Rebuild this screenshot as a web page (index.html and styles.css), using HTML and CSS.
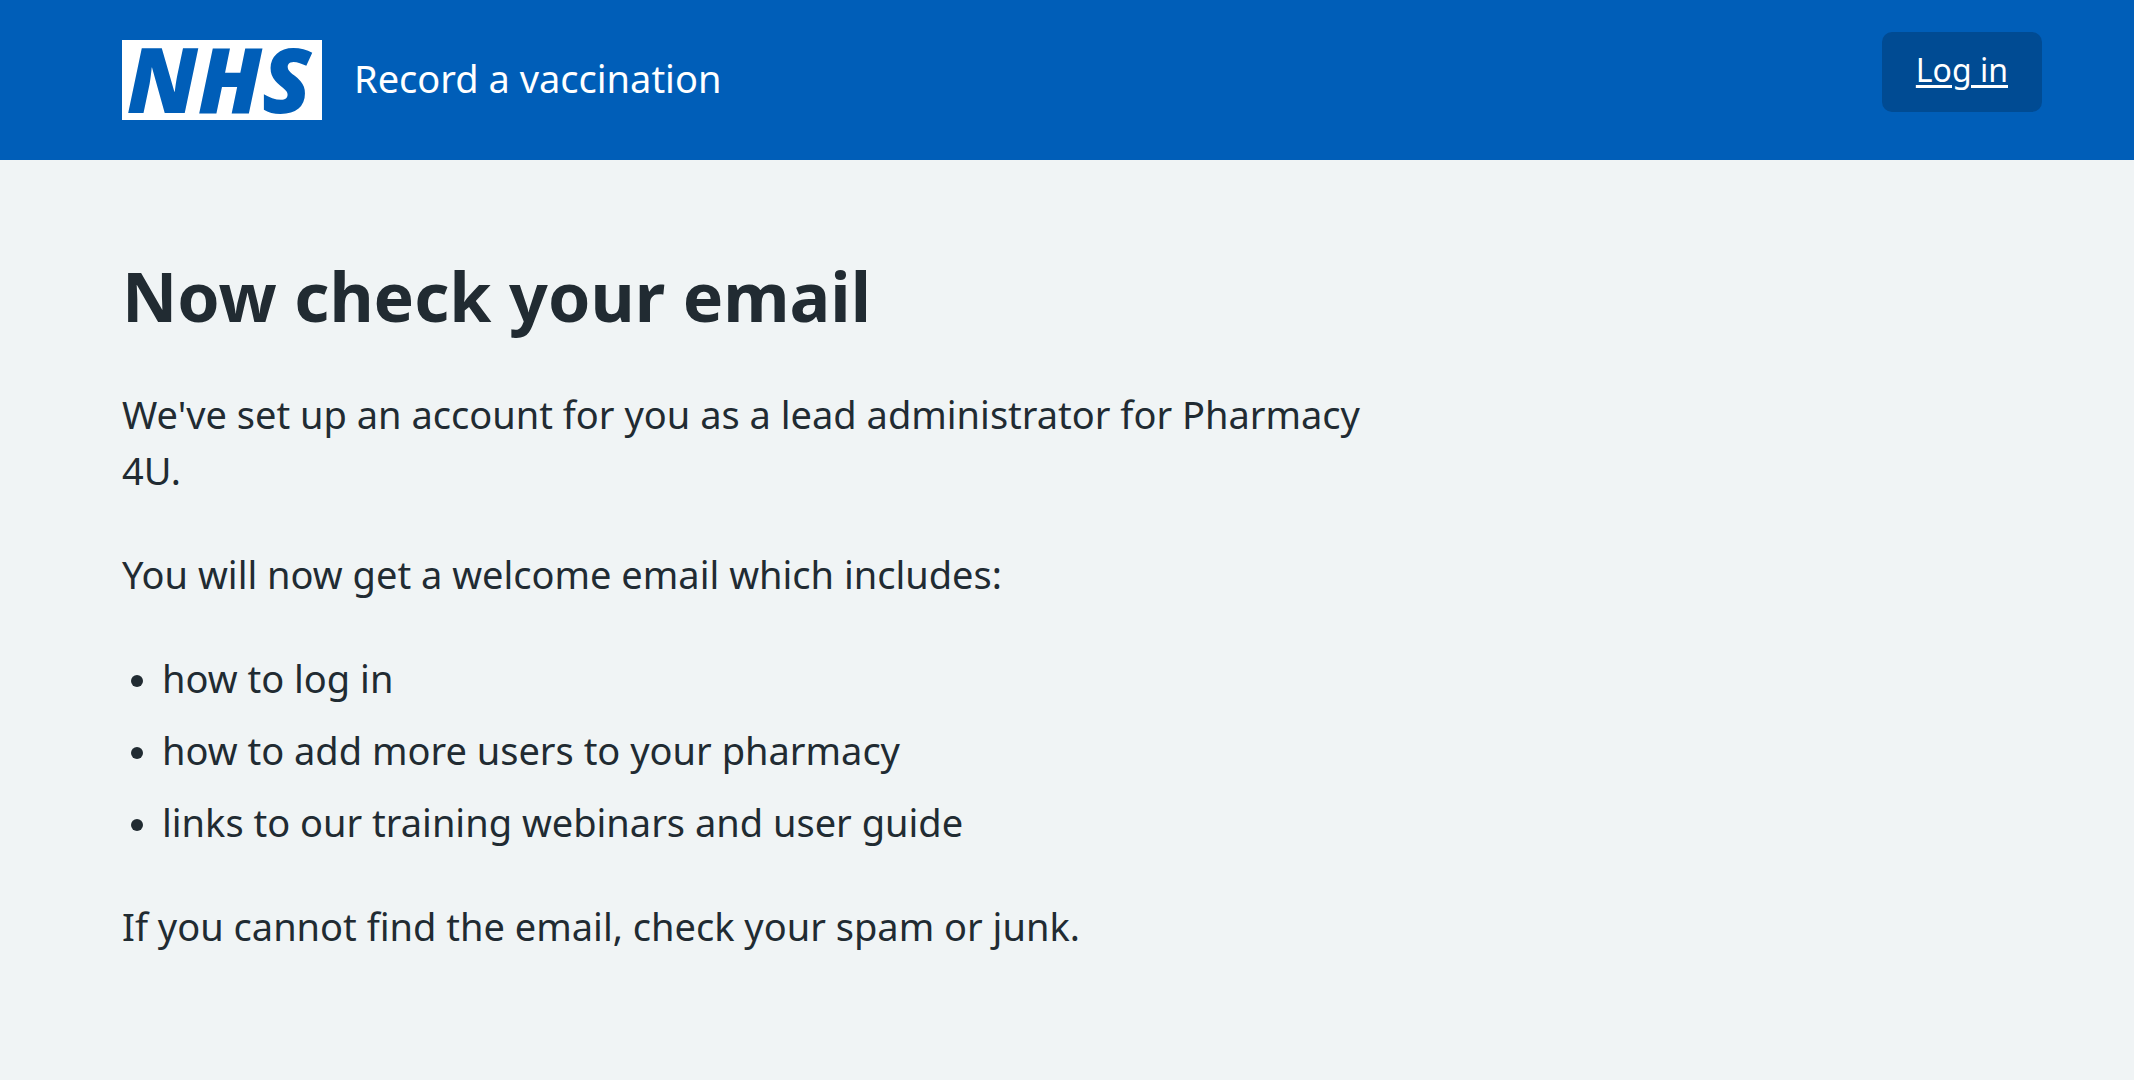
FILE: index.html
```html
<!DOCTYPE html>
<html lang="en">
<head>
<meta charset="utf-8">
<meta name="viewport" content="width=device-width, initial-scale=1">
<title>Now check your email - Record a vaccination</title>
<link rel="stylesheet" href="styles.css">
</head>
<body>
<header class="header">
  <a class="brand" href="#">
    <svg class="logo" viewBox="0 0 200 80" role="img" aria-label="NHS">
      <rect class="logo-box" width="200" height="80"/>
      <text class="logo-text" x="97" y="73" text-anchor="middle">NHS</text>
    </svg>
    <span class="service">Record a vaccination</span>
  </a>
  <nav class="account" aria-label="Account">
    <a class="login" href="#">Log in</a>
  </nav>
</header>
<main class="main">
  <h1 class="title">Now check your email</h1>
  <p class="text">We've set up an account for you as a lead administrator for Pharmacy 4U.</p>
  <p class="text">You will now get a welcome email which includes:</p>
  <ul class="list">
    <li>how to log in</li>
    <li>how to add more users to your pharmacy</li>
    <li>links to our training webinars and user guide</li>
  </ul>
  <p class="text">If you cannot find the email, check your spam or junk.</p>
</main>
</body>
</html>
```
FILE: styles.css
```css
* {
  box-sizing: border-box;
}

body {
  margin: 0;
  background: #f0f4f5;
  color: #212b32;
  font-family: "Noto Sans", "Open Sans", sans-serif;
  font-size: 38px;
  line-height: 56px;
}

.header {
  display: flex;
  align-items: flex-start;
  justify-content: space-between;
  padding: 32px 92px 40px 122px;
  background: #005eb8;
}

.brand {
  display: flex;
  align-items: center;
  gap: 32px;
  padding-top: 8px;
  color: #fff;
  text-decoration: none;
}

.logo {
  display: block;
  width: 200px;
  height: 80px;
  overflow: visible;
}

.logo-box {
  fill: #fff;
}

.logo-text {
  fill: #005eb8;
  font-family: "Open Sans", sans-serif;
  font-size: 90px;
  font-style: italic;
  font-weight: 800;
}

.service {
  padding-bottom: 4px;
}

.account {
  border-radius: 10px;
  background: #004b93;
}

.login {
  display: block;
  padding: 10px 34px 14px;
  color: #fff;
  font-size: 32px;
  text-decoration-thickness: 3px;
  text-underline-offset: 3px;
}

.main {
  max-width: 1412px;
  padding: 94px 32px 96px 122px;
}

.title {
  margin: 0 0 48px;
  font-size: 68px;
  font-weight: 700;
  line-height: 84px;
}

.text {
  margin: 0 0 48px;
}

.list {
  display: grid;
  gap: 16px;
  margin: 0 0 48px;
  padding-left: 40px;
}

.list li::marker {
  font-size: 34px;
}
```
